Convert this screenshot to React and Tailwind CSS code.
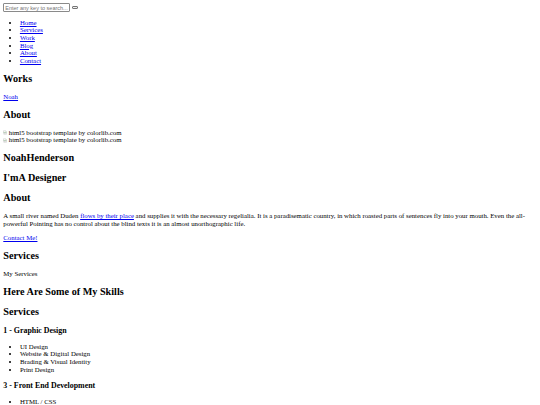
import React from 'react';

const link = 'text-[#0000ee] underline';
const h2 = 'text-[10.2px] font-bold leading-[11.5px] my-[8.4px]';
const h3 = 'text-[7.9px] font-bold leading-[9px] my-[7.75px]';
const para = 'my-[6.65px]';
const list = 'list-disc pl-[16.6px] my-[6.65px]';

function BrokenImage({ alt }) {
  return (
    <span>
      <svg width="4" height="5" viewBox="0 0 16 16" className="inline-block mr-[1.5px] align-[-0.5px]">
        <path d="M2 1h9l3 3v5l-2 1-2-1-2 1-2-1-2 1-2-1z" fill="#fff" stroke="#999" strokeWidth="1.2" />
        <path d="M3 11l2 1 2-1 2 1 2-1 2 1 1-0.5V15H3z" fill="#fff" stroke="#999" strokeWidth="1.2" />
        <path d="M4 8l2-2 2 2 2-3 2 3" fill="none" stroke="#4a9a4a" strokeWidth="1.5" />
      </svg>
      {alt}
    </span>
  );
}

export default function App() {
  return (
    <div className="bg-white min-h-screen text-black font-['Liberation_Serif',serif] text-[6.8px] leading-[7.65px] p-[3.3px] flow-root">
      <form className="block">
        <input
          type="text"
          placeholder="Enter any key to search..."
          className="w-[67px] h-[8.5px] border border-[#8a8a8a] rounded-[1px] px-[1px] text-[5.5px] font-['Liberation_Sans',sans-serif] placeholder:text-[#757575] align-middle"
        />
        <button
          type="button"
          className="ml-[2px] w-[6px] h-[2.8px] bg-[#efefef] border border-[#767676] rounded-[1px] align-middle"
        />
      </form>

      <ul className={list}>
        <li><a href="#" className={link}>Home</a></li>
        <li><a href="#" className={link}>Services</a></li>
        <li><a href="#" className={link}>Work</a></li>
        <li><a href="#" className={link}>Blog</a></li>
        <li><a href="#" className={link}>About</a></li>
        <li><a href="#" className={link}>Contact</a></li>
      </ul>

      <h2 className={h2}>Works</h2>
      <p className={para}><a href="#" className={link}>Noah</a></p>

      <h2 className={h2}>About</h2>
      <div className={para}>
        <div><BrokenImage alt="html5 bootstrap template by colorlib.com" /></div>
        <div><BrokenImage alt="html5 bootstrap template by colorlib.com" /></div>
      </div>

      <h2 className={h2}>NoahHenderson</h2>
      <h2 className={h2}>I'mA Designer</h2>

      <h2 className={h2}>About</h2>
      <p className={para}>
        A small river named Duden <a href="#" className={link}>flows by their place</a> and supplies it with the necessary regelialia. It is a paradisematic country, in which roasted parts of sentences fly into your mouth. Even the all-powerful Pointing has no control about the blind texts it is an almost unorthographic life.
      </p>
      <p className={para}><a href="#" className={link}>Contact Me!</a></p>

      <h2 className={h2}>Services</h2>
      <p className={para}>My Services</p>
      <h2 className={h2}>Here Are Some of My Skills</h2>

      <h2 className={h2}>Services</h2>
      <h3 className={h3}>1 - Graphic Design</h3>
      <ul className={list}>
        <li>UI Design</li>
        <li>Website &amp; Digital Design</li>
        <li>Brading &amp; Visual Identity</li>
        <li>Print Design</li>
      </ul>

      <h3 className={h3}>3 - Front End Development</h3>
      <ul className={list}>
        <li>HTML / CSS</li>
      </ul>
    </div>
  );
}
